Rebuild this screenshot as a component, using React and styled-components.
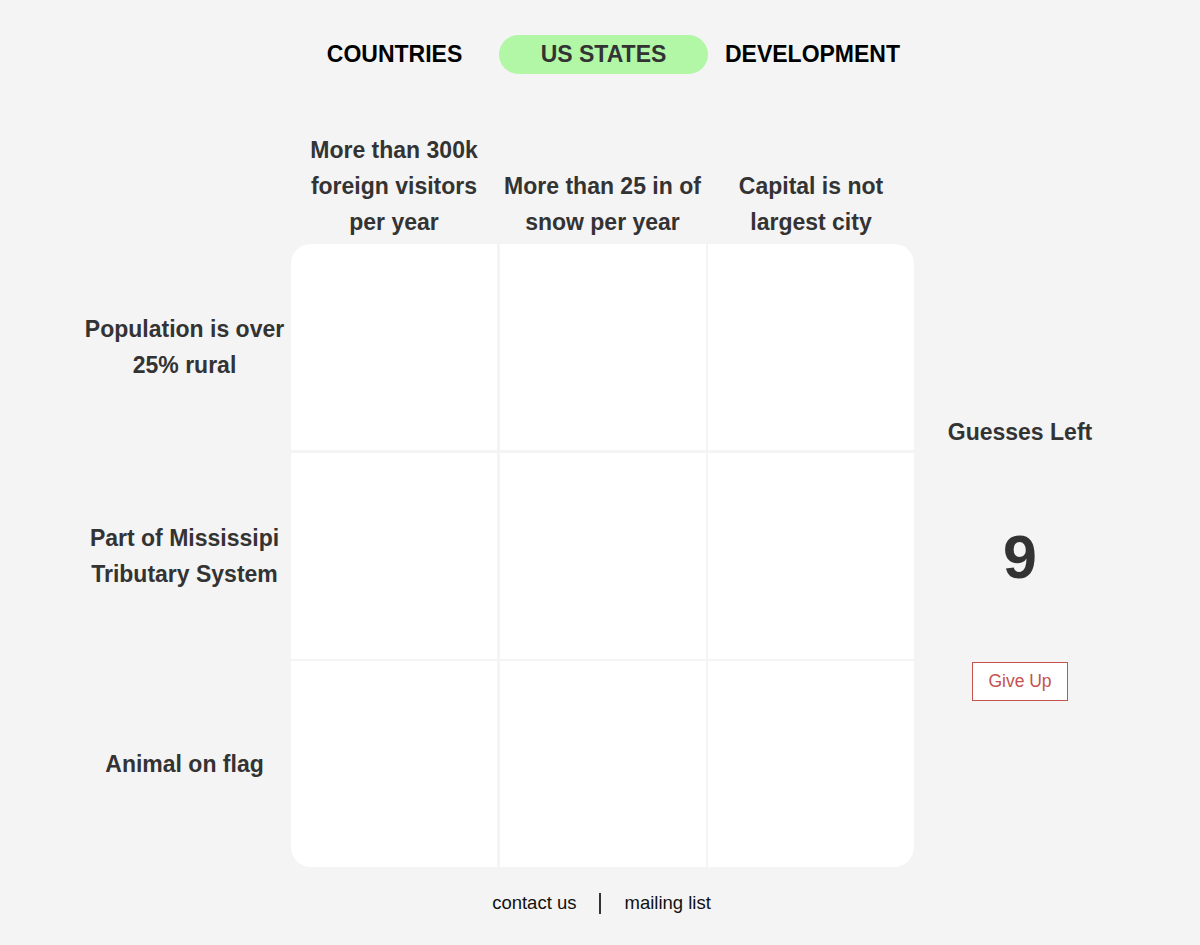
import React, { useState } from "react";
import styled, { createGlobalStyle } from "styled-components";

const GlobalStyle = createGlobalStyle`
  html, body {
    margin: 0;
    padding: 0;
    background: #f4f4f4;
    font-family: "Liberation Sans", Arial, sans-serif;
  }
`;

const Page = styled.div`
  width: 1046px;
  margin: 0 auto;
  padding: 35px 0 0 6px;
`;

const Nav = styled.nav`
  display: grid;
  grid-template-columns: 209px 209px 209px;
  margin-left: 210px;
  width: 627px;
`;

const NavItem = styled.a`
  height: 39px;
  display: flex;
  align-items: center;
  justify-content: center;
  font-size: 23px;
  font-weight: 700;
  color: ${(p) => (p.active ? "#333" : "#000")};
  background: ${(p) => (p.active ? "#b1f7a6" : "transparent")};
  border-radius: 20px;
  cursor: pointer;
  text-decoration: none;
`;

const Game = styled.div`
  display: grid;
  grid-template-columns: 211px 623px 212px;
  grid-template-rows: 108px 623px;
  row-gap: 4px;
  margin-top: 58px;
`;

const ColHeads = styled.div`
  grid-column: 2;
  display: grid;
  grid-template-columns: repeat(3, 1fr);
  column-gap: 2.5px;
`;

const Heading = styled.div`
  display: flex;
  align-items: flex-end;
  justify-content: center;
  text-align: center;
  font-size: 23px;
  font-weight: 700;
  line-height: 36px;
  color: #333;
`;

const RowHeads = styled.div`
  grid-column: 1;
  grid-row: 2;
  display: grid;
  grid-template-rows: repeat(3, 1fr);
  row-gap: 2.5px;
  padding-right: 2px;
`;

const RowHeading = styled(Heading)`
  align-items: center;
`;

const Board = styled.div`
  grid-column: 2;
  grid-row: 2;
  display: grid;
  grid-template-columns: repeat(3, 1fr);
  grid-template-rows: repeat(3, 1fr);
  gap: 2.5px;
  border-radius: 20px;
  overflow: hidden;
`;

const Cell = styled.button`
  background: #fff;
  border: none;
  padding: 0;
  cursor: pointer;
  &:hover {
    background: #fafafa;
  }
`;

const Side = styled.div`
  grid-column: 3;
  grid-row: 2;
  display: flex;
  flex-direction: column;
  align-items: center;
  justify-content: center;
  padding-top: 3px;
`;

const SideTitle = styled.div`
  font-size: 23px;
  font-weight: 700;
  line-height: 36px;
  color: #333;
`;

const Count = styled.div`
  margin-top: 71px;
  font-size: 61px;
  font-weight: 700;
  line-height: 72px;
  color: #333;
`;

const GiveUp = styled.button`
  margin-top: 69px;
  width: 96px;
  height: 39px;
  background: #fff;
  border: 1.5px solid #c4524f;
  color: #c4524f;
  font-family: "Liberation Sans", Arial, sans-serif;
  font-size: 17.5px;
  cursor: pointer;
`;

const Footer = styled.footer`
  display: flex;
  justify-content: center;
  align-items: center;
  gap: 23px;
  margin-top: 25px;
  margin-left: -3px;
  font-size: 18.5px;
  color: #111;
`;

const FootLink = styled.a`
  color: #111;
  text-decoration: none;
  cursor: pointer;
`;

const Divider = styled.span`
  width: 2px;
  height: 21px;
  background: #333;
`;

const colBreaks = [
  ["More than 300k", "foreign visitors", "per year"],
  ["More than 25 in of", "snow per year"],
  ["Capital is not", "largest city"],
];
const rowBreaks = [
  ["Population is over", "25% rural"],
  ["Part of Mississipi", "Tributary System"],
  ["Animal on flag"],
];

const Lines = ({ lines }) =>
  lines.map((l, i) => (
    <React.Fragment key={i}>
      {l}
      {i < lines.length - 1 && <br />}
    </React.Fragment>
  ));

export default function App() {
  const [tab, setTab] = useState("US STATES");
  const [guesses] = useState(9);

  return (
    <>
      <GlobalStyle />
      <Page>
        <Nav>
          {["COUNTRIES", "US STATES", "DEVELOPMENT"].map((t) => (
            <NavItem key={t} active={tab === t ? 1 : 0} onClick={() => setTab(t)}>
              {t}
            </NavItem>
          ))}
        </Nav>
        <Game>
          <ColHeads>
            {colBreaks.map((c, i) => (
              <Heading key={i}>
                <div>
                  <Lines lines={c} />
                </div>
              </Heading>
            ))}
          </ColHeads>
          <RowHeads>
            {rowBreaks.map((r, i) => (
              <RowHeading key={i}>
                <div>
                  <Lines lines={r} />
                </div>
              </RowHeading>
            ))}
          </RowHeads>
          <Board>
            {Array.from({ length: 9 }).map((_, i) => (
              <Cell key={i} aria-label={`cell ${i + 1}`} />
            ))}
          </Board>
          <Side>
            <SideTitle>Guesses Left</SideTitle>
            <Count>{guesses}</Count>
            <GiveUp>Give Up</GiveUp>
          </Side>
        </Game>
        <Footer>
          <FootLink>contact us</FootLink>
          <Divider />
          <FootLink>mailing list</FootLink>
        </Footer>
      </Page>
    </>
  );
}
